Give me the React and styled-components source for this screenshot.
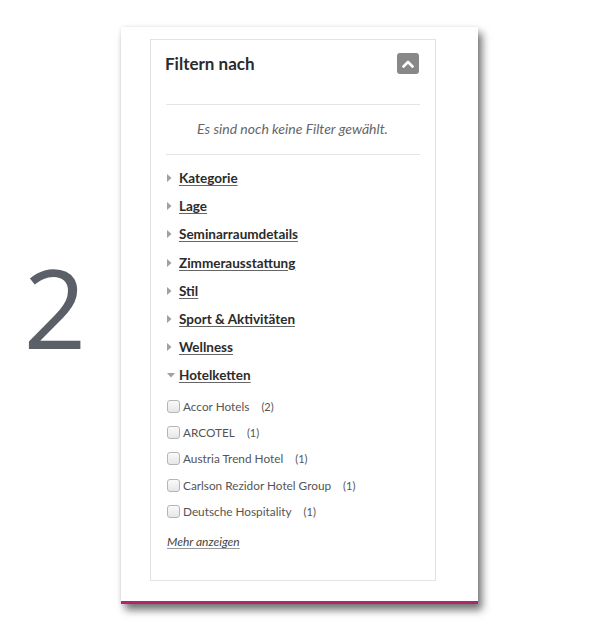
import React from "react";
import styled, { createGlobalStyle } from "styled-components";

const Global = createGlobalStyle`
  html, body { margin: 0; padding: 0; background: #fff; }
  body { font-family: Lato, "Open Sans", sans-serif; color: #333; }
`;

const Page = styled.div`
  display: flex;
  align-items: center;
  padding-top: 27px;
  padding-bottom: 20px;
  width: 600px;
`;

const StepNumber = styled.div`
  width: 110px;
  margin-right: 11px;
  text-align: center;
  font-family: "Open Sans", sans-serif;
  font-weight: 400;
  font-size: 110px;
  line-height: 1;
  color: #5b6068;
  margin-top: -19px;
`;

const Card = styled.div`
  width: 357px;
  box-sizing: border-box;
  background: #fff;
  padding: 12px 42px 20px 29px;
  border-bottom: 3px solid #b3246c;
  box-shadow: 4px 6px 8px rgba(0, 0, 0, 0.55), 0 0 4px rgba(0, 0, 0, 0.08);
`;

const Panel = styled.div`
  border: 1px solid #e2e2e2;
  padding: 0 15px 31px 14px;
  height: 542px;
  box-sizing: border-box;
`;

const Header = styled.div`
  display: flex;
  justify-content: space-between;
  align-items: center;
  padding-top: 13px;
  height: 21px;
`;

const Title = styled.h2`
  margin: 0;
  font-size: 17px;
  font-weight: 700;
  color: #2b2b2b;
`;

const Toggle = styled.button`
  width: 22px;
  height: 21px;
  border: none;
  border-radius: 3px;
  background: #888;
  padding: 0;
  margin-right: 1px;
  display: flex;
  align-items: center;
  justify-content: center;
`;

const Divider = styled.div`
  height: 1px;
  background: #e4e4e4;
  margin-top: ${(p) => p.$top || 0}px;
  margin-left: 1px;
`;

const Empty = styled.p`
  margin: 0;
  padding: 14px 0 15px;
  line-height: 20px;
  text-align: center;
  font-style: italic;
  font-size: 14px;
  color: #666;
`;

const Groups = styled.ul`
  list-style: none;
  margin: 9px 0 0;
  padding: 0;
`;

const Group = styled.li`
  display: flex;
  align-items: center;
  height: 28.2px;
`;

const Arrow = styled.span`
  width: 14px;
  display: flex;
  align-items: center;
  padding-left: 2px;
  box-sizing: border-box;
`;

const GroupLink = styled.a`
  font-size: 13.5px;
  font-weight: 700;
  color: #2b2b2b;
  text-decoration: underline;
  text-decoration-color: #666;
  text-underline-offset: 2px;
`;

const Options = styled.ul`
  list-style: none;
  margin: 4px 0 0;
  padding: 0;
`;

const Option = styled.li`
  display: flex;
  align-items: center;
  height: 26.2px;
  font-size: 11.8px;
  color: #555;
`;

const Box = styled.span`
  width: 11px;
  height: 11px;
  border: 1px solid #b5b5b5;
  border-radius: 3px;
  background: linear-gradient(#fafafa, #e6e6e6);
  margin-left: 2px;
  margin-right: 3px;
`;

const Count = styled.span`
  margin-left: 12px;
  font-size: 11px;
  color: #555;
`;

const More = styled.a`
  display: inline-block;
  margin-top: 10px;
  line-height: 16px;
  font-size: 12px;
  font-style: italic;
  color: #444;
  text-decoration: underline;
  text-decoration-color: #999;
  text-underline-offset: 2px;
  margin-left: 2px;
`;

const groups = [
  "Kategorie",
  "Lage",
  "Seminarraumdetails",
  "Zimmerausstattung",
  "Stil",
  "Sport & Aktivitäten",
  "Wellness",
];

const chains = [
  ["Accor Hotels", 2],
  ["ARCOTEL", 1],
  ["Austria Trend Hotel", 1],
  ["Carlson Rezidor Hotel Group", 1],
  ["Deutsche Hospitality", 1],
];

const Right = () => (
  <svg width="5" height="8" viewBox="0 0 5 8">
    <path d="M0 0 L4.5 4 L0 8 Z" fill="#a0a0a0" />
  </svg>
);
const Down = () => (
  <svg width="8" height="5" viewBox="0 0 8 5">
    <path d="M0 0 L8 0 L4 4.5 Z" fill="#a0a0a0" />
  </svg>
);

export default function App() {
  return (
    <>
      <Global />
      <Page>
        <StepNumber>2</StepNumber>
        <Card>
          <Panel>
            <Header>
              <Title>Filtern nach</Title>
              <Toggle aria-label="Einklappen">
                <svg width="12" height="8" viewBox="0 0 12 8">
                  <path d="M1.5 6.5 L6 2 L10.5 6.5" fill="none" stroke="#fff" strokeWidth="2.6" strokeLinecap="round" strokeLinejoin="round" />
                </svg>
              </Toggle>
            </Header>
            <Divider $top={30} />
            <Empty>Es sind noch keine Filter gewählt.</Empty>
            <Divider />
            <Groups>
              {groups.map((g) => (
                <Group key={g}>
                  <Arrow><Right /></Arrow>
                  <GroupLink href="#">{g}</GroupLink>
                </Group>
              ))}
              <Group>
                <Arrow><Down /></Arrow>
                <GroupLink href="#">Hotelketten</GroupLink>
              </Group>
            </Groups>
            <Options>
              {chains.map(([n, c]) => (
                <Option key={n}>
                  <Box />
                  {n}
                  <Count>({c})</Count>
                </Option>
              ))}
            </Options>
            <More href="#">Mehr anzeigen</More>
          </Panel>
        </Card>
      </Page>
    </>
  );
}
